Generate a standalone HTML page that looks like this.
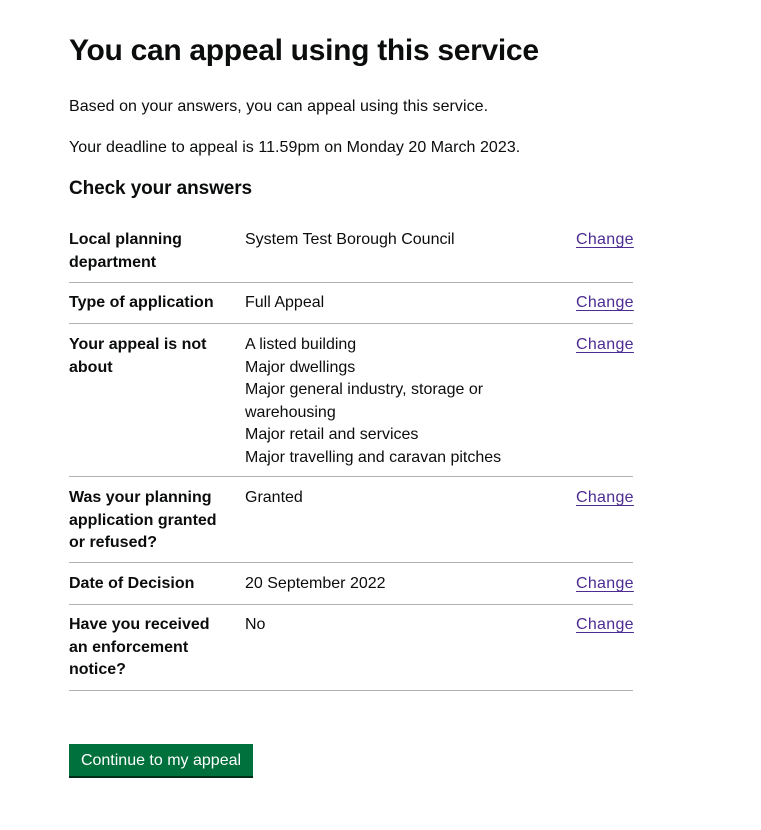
<!DOCTYPE html>
<html><head><meta charset="utf-8"><style>
body{margin:0;background:#fff;font-family:"Liberation Sans",Arial,sans-serif;color:#0b0c0c;width:761px;height:830px;position:relative;overflow:hidden}
h1{position:absolute;left:69px;top:31px;margin:0;font-size:30px;font-weight:bold;letter-spacing:-0.3px;line-height:40px}
p{position:absolute;left:69px;margin:0;font-size:16px;line-height:20px;letter-spacing:0.05px}
h2{position:absolute;left:69px;top:177px;margin:0;font-size:19px;font-weight:bold;line-height:24px;letter-spacing:-0.1px}
.k,.v,.c{position:absolute;font-size:16px;line-height:22.5px;letter-spacing:0}
.k{left:69px;font-weight:bold;width:170px}
.v{left:245px;width:330px}
.c{left:576px;color:#4c2c92;text-decoration:underline;text-underline-offset:3px;letter-spacing:0.3px}
.hr{position:absolute;left:69px;width:564px;height:1px;background:#b1b4b6}
.btn{position:absolute;left:69px;top:744px;width:184px;height:32px;background:#00703c;box-shadow:0 2px 0 #002d18;color:#fff;font-size:16px;line-height:34px;text-align:center}
</style></head><body>
<h1>You can appeal using this service</h1>
<p style="top:97px">Based on your answers, you can appeal using this service.</p>
<p style="top:138px">Your deadline to appeal is 11.59pm on Monday 20 March 2023.</p>
<h2>Check your answers</h2>

<div class="k" style="top:229px">Local planning<br>department</div>
<div class="v" style="top:229px">System Test Borough Council</div>
<div class="c" style="top:229px">Change</div>
<div class="hr" style="top:282px"></div>

<div class="k" style="top:292px">Type of application</div>
<div class="v" style="top:292px">Full Appeal</div>
<div class="c" style="top:292px">Change</div>
<div class="hr" style="top:323px"></div>

<div class="k" style="top:334px">Your appeal is not<br>about</div>
<div class="v" style="top:334px">A listed building<br>Major dwellings<br>Major general industry, storage or<br>warehousing<br>Major retail and services<br>Major travelling and caravan pitches</div>
<div class="c" style="top:334px">Change</div>
<div class="hr" style="top:476px"></div>

<div class="k" style="top:487px">Was your planning<br>application granted<br>or refused?</div>
<div class="v" style="top:487px">Granted</div>
<div class="c" style="top:487px">Change</div>
<div class="hr" style="top:562px"></div>

<div class="k" style="top:573px">Date of Decision</div>
<div class="v" style="top:573px">20 September 2022</div>
<div class="c" style="top:573px">Change</div>
<div class="hr" style="top:604px"></div>

<div class="k" style="top:614px">Have you received<br>an enforcement<br>notice?</div>
<div class="v" style="top:614px">No</div>
<div class="c" style="top:614px">Change</div>
<div class="hr" style="top:690px"></div>

<div class="btn">Continue to my appeal</div>
</body></html>
